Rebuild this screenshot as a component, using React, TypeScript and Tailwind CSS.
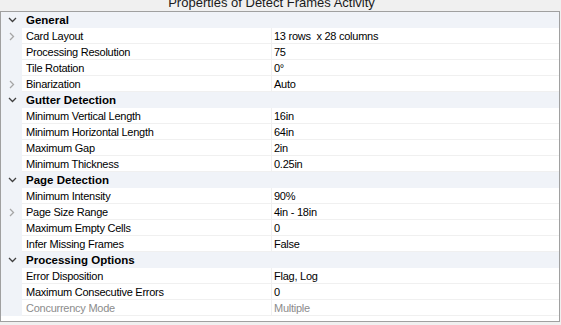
import React from "react";

type Row =
  | { kind: "cat"; label: string }
  | { kind: "prop"; label: string; value: string; expand?: boolean; disabled?: boolean };

const rows: Row[] = [
  { kind: "cat", label: "General" },
  { kind: "prop", label: "Card Layout", value: "13 rows  x 28 columns", expand: true },
  { kind: "prop", label: "Processing Resolution", value: "75" },
  { kind: "prop", label: "Tile Rotation", value: "0°" },
  { kind: "prop", label: "Binarization", value: "Auto", expand: true },
  { kind: "cat", label: "Gutter Detection" },
  { kind: "prop", label: "Minimum Vertical Length", value: "16in" },
  { kind: "prop", label: "Minimum Horizontal Length", value: "64in" },
  { kind: "prop", label: "Maximum Gap", value: "2in" },
  { kind: "prop", label: "Minimum Thickness", value: "0.25in" },
  { kind: "cat", label: "Page Detection" },
  { kind: "prop", label: "Minimum Intensity", value: "90%" },
  { kind: "prop", label: "Page Size Range", value: "4in - 18in", expand: true },
  { kind: "prop", label: "Maximum Empty Cells", value: "0" },
  { kind: "prop", label: "Infer Missing Frames", value: "False" },
  { kind: "cat", label: "Processing Options" },
  { kind: "prop", label: "Error Disposition", value: "Flag, Log" },
  { kind: "prop", label: "Maximum Consecutive Errors", value: "0" },
  { kind: "prop", label: "Concurrency Mode", value: "Multiple", disabled: true },
];

function Down() {
  return (
    <svg width="9" height="6" viewBox="0 0 9 6" className="block">
      <polyline points="1,1 4.5,4.5 8,1" fill="none" stroke="#404040" strokeWidth="1.3" />
    </svg>
  );
}

function Right() {
  return (
    <svg width="6" height="9" viewBox="0 0 6 9" className="block">
      <polyline points="1,1 4.5,4.5 1,8" fill="none" stroke="#a6a6a6" strokeWidth="1.3" />
    </svg>
  );
}

export default function App() {
  return (
    <div
      className="w-[561px] h-[325px] overflow-hidden bg-[#f0f0f0] text-[11px] tracking-[-0.25px] text-black"
      style={{ fontFamily: '"Liberation Sans", Arial, sans-serif' }}
    >
      <div className="h-[11px] overflow-hidden flex justify-center pr-[18px]">
        <div className="text-[13px] tracking-normal leading-[16px] -mt-[5px] text-[#1a1a1a] whitespace-nowrap">
          Properties of Detect Frames Activity
        </div>
      </div>
      <div className="w-[560px] h-[311px] border border-[#a0a0a0] bg-white flex flex-col">
        {rows.map((r, i) =>
          r.kind === "cat" ? (
            <div key={i} className="h-[16px] flex bg-[#f0f3f8] border-b border-[#f0f3f8]">
              <div className="w-[21px] flex items-center justify-center pl-[1px] pt-[1px]">
                <Down />
              </div>
              <div className="pl-[4px] font-bold text-[11.5px] tracking-normal leading-[15px] pt-[1px]">
                {r.label}
              </div>
            </div>
          ) : (
            <div key={i} className="h-[16px] flex">
              <div className="w-[21px] bg-[#f0f3f8] flex items-center justify-center pt-[1px]">
                {r.expand ? <Right /> : null}
              </div>
              <div
                className={`w-[250px] border-r border-b border-[#f0f0f0] pl-[4px] pt-[1px] leading-[14px] whitespace-nowrap ${
                  r.disabled ? "text-[#8c8c8c]" : ""
                }`}
              >
                {r.label}
              </div>
              <div
                className={`flex-1 border-b border-[#f0f0f0] pl-[2px] pt-[1px] leading-[14px] whitespace-pre ${
                  r.disabled ? "text-[#8c8c8c]" : ""
                }`}
              >
                {r.value}
              </div>
            </div>
          )
        )}
      </div>
    </div>
  );
}
